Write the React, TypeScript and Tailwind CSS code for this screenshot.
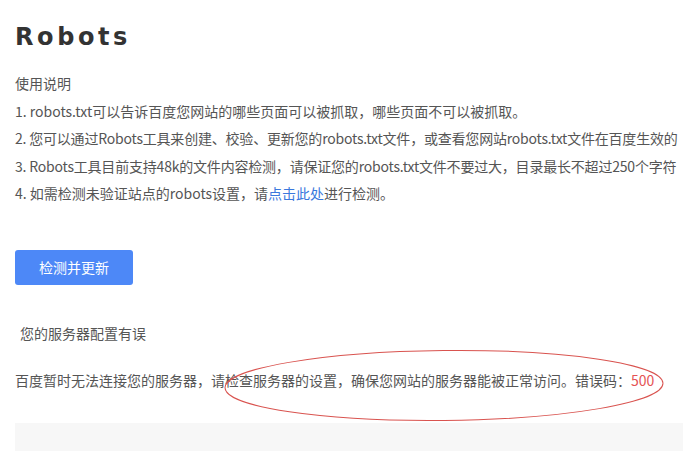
import React from "react";

const cjk = '"Microsoft YaHei", "Noto Sans CJK SC", "Noto Sans", sans-serif';

export default function App() {
  return (
    <div className="relative w-[683px] h-[451px] overflow-hidden bg-white" style={{ fontFamily: cjk }}>
      <div className="pl-[15px] pt-[20px]">
        <h1
          className="text-[24px] leading-[34px] font-bold tracking-[3.6px] text-[#333333]"
          style={{ fontFamily: '"DejaVu Sans", Verdana, sans-serif' }}
        >
          Robots
        </h1>
        <div className="mt-[16px] text-[14px] leading-[27.5px] text-[#555555] whitespace-nowrap">
          <p>使用说明</p>
          <p>1. robots.txt可以告诉百度您网站的哪些页面可以被抓取，哪些页面不可以被抓取。</p>
          <p className="tracking-[-0.2px]">2. 您可以通过Robots工具来创建、校验、更新您的robots.txt文件，或查看您网站robots.txt文件在百度生效的</p>
          <p className="tracking-[-0.2px]">3. Robots工具目前支持48k的文件内容检测，请保证您的robots.txt文件不要过大，目录最长不超过250个字符</p>
          <p>
            4. 如需检测未验证站点的robots设置，请<span className="text-[#3b78dd]">点击此处</span>进行检测。
          </p>
        </div>
        <button className="mt-[42px] w-[118px] h-[35px] rounded-[3px] bg-[#4d88f7] text-white text-[14px] leading-[35px] text-center">
          检测并更新
        </button>
        <p className="mt-[38px] pl-[5px] text-[14px] leading-[20px] text-[#555555]">您的服务器配置有误</p>
        <p className="mt-[27px] text-[14px] leading-[20px] text-[#555555] whitespace-nowrap">
          百度暂时无法连接您的服务器，请检查服务器的设置，确保您网站的服务器能被正常访问。错误码：
          <span className="text-[#e55353]">500</span>
        </p>
        <div className="mt-[33px] h-[40px] bg-[#f7f7f7]" />
      </div>
      <svg className="absolute left-0 top-0 pointer-events-none" width="683" height="451">
        <ellipse
          cx="444"
          cy="385.5"
          rx="219"
          ry="35"
          fill="none"
          stroke="#d9534f"
          strokeWidth="1"
          transform="rotate(-0.6 444 385.5)"
        />
      </svg>
    </div>
  );
}
